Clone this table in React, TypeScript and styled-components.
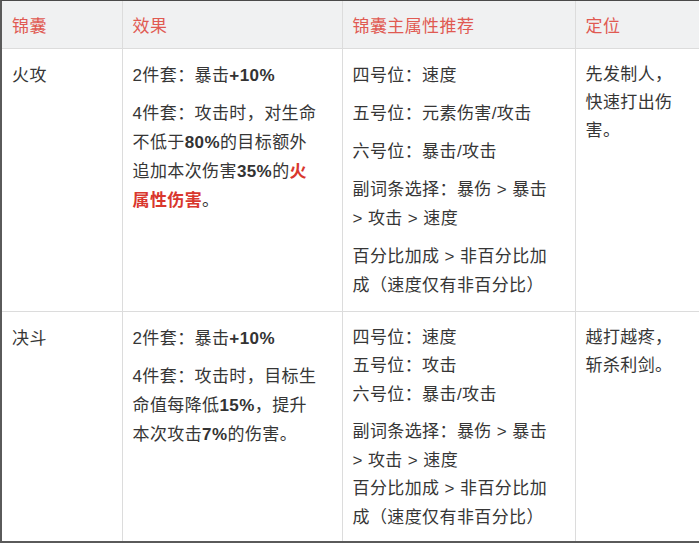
import React from 'react'
import styled, { createGlobalStyle } from 'styled-components'

const GlobalStyle = createGlobalStyle`
  html, body {
    margin: 0;
    padding: 0;
    background: #ffffff;
  }
  body {
    font-family: "Liberation Sans", "Noto Sans CJK SC", sans-serif;
  }
`

const Frame = styled.div`
  width: 699px;
  height: 543px;
  box-sizing: border-box;
  border-left: 2px solid #5a5a5a;
  border-top: 1px solid #4a4a4a;
  border-bottom: 2px solid #5a5a5a;
  overflow: hidden;
  background: #fff;
`

const Table = styled.table`
  border-collapse: collapse;
  table-layout: fixed;
  width: 697px;
  font-size: 17px;
  letter-spacing: 0.4px;
  color: #363636;
`

const HeadRow = styled.tr`
  height: 47px;
  background: #f0f1f2;
`

const HeadCell = styled.th<{ $w: number }>`
  width: ${({ $w }) => $w}px;
  box-sizing: border-box;
  padding: 0 10px;
  text-align: left;
  font-weight: 400;
  color: #e05a52;
  border-right: 1px solid #dcdcdc;
  border-bottom: 1px solid #dcdcdc;
  vertical-align: middle;
`

const BodyRow = styled.tr<{ $h: number }>`
  height: ${({ $h }) => $h}px;
`

const Cell = styled.td<{ $pr?: number; $lh?: number }>`
  vertical-align: top;
  padding: 12px ${({ $pr }) => $pr ?? 20}px 0 10px;
  line-height: ${({ $lh }) => $lh ?? 29}px;
  border-right: 1px solid #dcdcdc;
  border-bottom: 1px solid #dcdcdc;
  word-break: break-all;
`

const Para = styled.p`
  margin: 0 0 9px;
  &:last-child {
    margin-bottom: 0;
  }
`

const Strong = styled.b`
  font-weight: 700;
  color: #333;
`

const Fire = styled.b`
  font-weight: 700;
  color: #d9372e;
`

export default function App() {
  return (
    <>
      <GlobalStyle />
      <Frame>
        <Table>
          <thead>
            <HeadRow>
              <HeadCell $w={120}>锦囊</HeadCell>
              <HeadCell $w={220}>效果</HeadCell>
              <HeadCell $w={233}>锦囊主属性推荐</HeadCell>
              <HeadCell $w={124}>定位</HeadCell>
            </HeadRow>
          </thead>
          <tbody>
            <BodyRow $h={263}>
              <Cell>火攻</Cell>
              <Cell $pr={23}>
                <Para>2件套：暴击<Strong>+10%</Strong></Para>
                <Para>
                  4件套：攻击时，对生命不低于<Strong>80%</Strong>的目标额外追加本次伤害<Strong>35%</Strong>的<Fire>火属性伤害</Fire>。
                </Para>
              </Cell>
              <Cell $pr={22}>
                <Para>四号位：速度</Para>
                <Para>五号位：元素伤害/攻击</Para>
                <Para>六号位：暴击/攻击</Para>
                <Para>副词条选择：暴伤 &gt; 暴击 &gt; 攻击 &gt; 速度</Para>
                <Para>百分比加成 &gt; 非百分比加成（速度仅有非百分比）</Para>
              </Cell>
              <Cell $pr={14} $lh={28}>先发制人，快速打出伤害。</Cell>
            </BodyRow>
            <BodyRow $h={230}>
              <Cell>决斗</Cell>
              <Cell $pr={23}>
                <Para>2件套：暴击<Strong>+10%</Strong></Para>
                <Para>
                  4件套：攻击时，目标生命值每降低<Strong>15%</Strong>，提升本次攻击<Strong>7%</Strong>的伤害。
                </Para>
              </Cell>
              <Cell $pr={22} $lh={28.5}>
                <Para>
                  四号位：速度<br />
                  五号位：攻击<br />
                  六号位：暴击/攻击
                </Para>
                <Para>
                  副词条选择：暴伤 &gt; 暴击 &gt; 攻击 &gt; 速度<br />
                  百分比加成 &gt; 非百分比加成（速度仅有非百分比）
                </Para>
              </Cell>
              <Cell $pr={14} $lh={28}>越打越疼，斩杀利剑。</Cell>
            </BodyRow>
          </tbody>
        </Table>
      </Frame>
    </>
  )
}
